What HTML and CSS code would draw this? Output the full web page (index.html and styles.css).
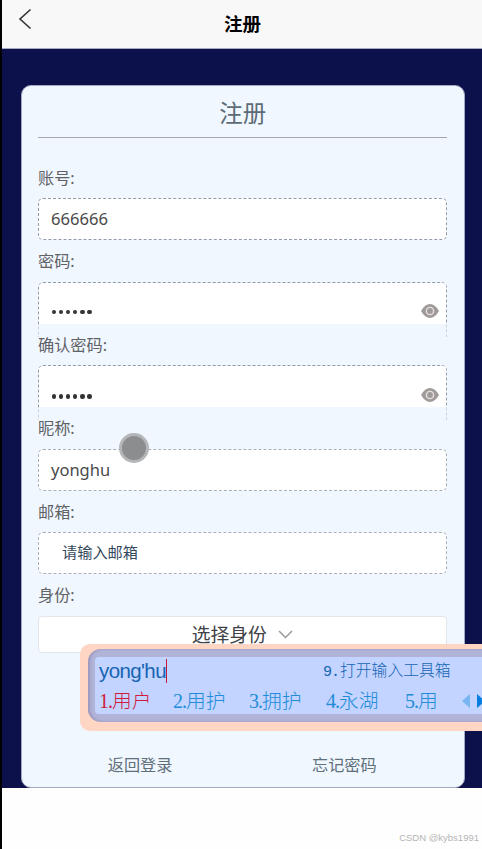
FILE: index.html
```html
<!DOCTYPE html>
<html lang="zh-CN">
<head>
<meta charset="utf-8">
<title>注册</title>
<link rel="stylesheet" href="styles.css">
</head>
<body>
<div class="phone">
  <header class="navbar">
    <svg class="back" viewBox="0 0 14 22"><path d="M12.500 1.500 2 11l10.500 9.500"/></svg>
    <h1>注册</h1>
  </header>
  <main class="page">
    <form class="card">
      <h2>注册</h2>
      <label>账号:</label>
      <div class="field">666666</div>
      <label>密码:</label>
      <div class="slot"><div class="field secret">
        <span class="dots"><i></i><i></i><i></i><i></i><i></i><i></i></span>
        <svg class="eye" viewBox="0 0 18 14"><path d="M0 7Q4 0 9 0t9 7q-4 7-9 7T0 7Z"/><circle class="ring" cx="9" cy="7" r="3.600"/></svg>
      </div></div>
      <label>确认密码:</label>
      <div class="slot"><div class="field secret second">
        <span class="dots"><i></i><i></i><i></i><i></i><i></i><i></i></span>
        <svg class="eye" viewBox="0 0 18 14"><path d="M0 7Q4 0 9 0t9 7q-4 7-9 7T0 7Z"/><circle class="ring" cx="9" cy="7" r="3.600"/></svg>
      </div></div>
      <label>昵称:</label>
      <div class="field pale nick">yonghu</div>
      <label>邮箱:</label>
      <div class="field pale placeholder">请输入邮箱</div>
      <label>身份:</label>
      <div class="select"><span>选择身份</span><svg viewBox="0 0 15 9"><path d="m1 1 6.500 6.500L14 1"/></svg></div>
      <nav class="links"><a>返回登录</a><a>忘记密码</a></nav>
    </form>
  </main>
  <footer>CSDN @kybs1991</footer>
  <div class="touch"></div>
  <div class="ime">
    <div class="ime-ring"><div class="ime-body">
      <div class="compose"><span class="pinyin">yong'hu</span><span class="tool"><b>9.</b>打开输入工具箱</span></div>
      <div class="candidates">
        <span class="active"><b>1.</b>用户</span><span><b>2.</b>用护</span><span><b>3.</b>拥护</span><span><b>4.</b>永湖</span><span><b>5.</b>用</span>
        <svg viewBox="0 0 22 14"><path class="prev" d="M8 0v14L0 7Z"/><path class="next" d="M15 0v14l8-7Z"/></svg>
      </div>
    </div></div>
  </div>
</div>
</body>
</html>
```
FILE: styles.css
```css
* { box-sizing: border-box; }
body { margin: 0; background: #fff; }
h1, h2 { margin: 0; }
.phone {
  position: relative;
  width: 482px;
  height: 849px;
  overflow: hidden;
  border-left: 2px solid #000;
  background: #fefefe;
  display: flex;
  flex-direction: column;
  font-family: "Noto Sans", "Noto Sans CJK SC", sans-serif;
}
.navbar {
  height: 49px;
  flex: none;
  display: grid;
  grid-template-columns: 40px 1fr 40px;
  background: #f8f8f8;
  border-bottom: 1px solid #a9abc4;
}
.back { width: 14px; height: 22px; margin: 8px 0 0 16px; fill: none; stroke: #333; stroke-width: 1.6; }
.navbar h1 { padding-left: 1px; text-align: center; font: bold 18.5px/46px "Noto Sans CJK SC", sans-serif; color: #000; }
.page { height: 738.5px; flex: none; padding: 36px 17.500px 0 19px; background: #0d114b; }
.card {
  height: 702.5px;
  padding: 0 17px 0 16px;
  border: 1px solid #a3a8c4;
  border-radius: 10px;
  background: #f0f7ff;
}
.card h2 {
  height: 52px;
  margin-bottom: 18.8px;
  padding-left: 1px;
  border-bottom: 1.5px solid #a5a7ae;
  text-align: center;
  font: 400 23.5px/53px "Noto Sans CJK SC", sans-serif;
  color: #5c6b76;
}
label { display: block; height: 41.7px; line-height: 42px; font-size: 16.2px; color: #606266; }
.field {
  height: 41.8px;
  border: 1.5px dashed #929baa;
  border-radius: 5px;
  background: #fff;
  padding-left: 12px;
  font-size: 16.6px;
  line-height: 39px;
  color: #4a4a4a;
}
.pale { border-color: #a8afbc; }
.nick { font-size: 16.5px; }
.placeholder { padding-left: 23px; font-size: 15.2px; color: #34495e; }
.slot { height: 41.8px; }
.secret {
  height: 55px;
  border-bottom: 0;
  border-radius: 5px 5px 0 0;
  background: linear-gradient(#fff 0 41px, #f0f7ff 41px);
  padding: 21px 7px 0 12.500px;
  display: flex;
  justify-content: space-between;
  align-items: flex-start;
  -webkit-mask-image: linear-gradient(#000 42px, rgba(0,0,0,.4) 43px);
  mask-image: linear-gradient(#000 42px, rgba(0,0,0,.4) 43px);
}
.second { padding-top: 22px; }
.dots { display: flex; gap: 2.8px; padding-top: 6px; }
.dots i { width: 4.4px; height: 4.4px; border-radius: 50%; background: #333; }
.eye { width: 18px; height: 14px; fill: #a09a99; }
.ring { stroke: #e4e2e2; stroke-width: 1.4; }
.select {
  height: 37px;
  border: 1px solid #e2e5ea;
  border-radius: 4px;
  background: #fff;
  display: flex;
  justify-content: center;
  align-items: center;
  gap: 11px;
  font-size: 18.8px;
  color: #404247;
}
.select svg { width: 15px; height: 9px; fill: none; stroke: #999; stroke-width: 1.5; }
.links { display: grid; grid-template-columns: 1fr 1fr; margin-top: 100px; text-align: center; font-size: 16.2px; line-height: 24px; color: #60707b; }
footer { padding: 42px 3px 0; text-align: right; font: 9.5px/16px "Liberation Sans", sans-serif; color: #b5b5b5; }
.touch {
  position: absolute;
  left: 117px;
  top: 433px;
  width: 30px;
  height: 30px;
  border: 3px solid #b4b6b8;
  border-radius: 50%;
  background: #8b8d8f;
}
.ime {
  position: absolute;
  left: 78px;
  top: 644px;
  width: 420px;
  height: 87px;
  padding: 5px 0 9px 8px;
  border-radius: 10px;
  background: #fed6c3;
}
.ime-ring { height: 73px; padding: 8px 0 8px 7px; border-radius: 13px; background: #b1b4d8; box-shadow: inset 2px 0 3px #9c95ba; }
.ime-body { height: 57px; padding-left: 4px; border-radius: 4px; background: #c2d4ff; }
.compose { display: flex; height: 28px; color: #1764b3; }
.pinyin { width: 68px; height: 24px; margin-top: 2px; border-right: 1.5px solid #c5163b; font: 20.5px/24px "Liberation Sans", sans-serif; letter-spacing: -.6px; white-space: nowrap; }
.tool { margin-left: 156px; font: 300 15.8px/26px "Noto Sans CJK SC", sans-serif; white-space: nowrap; }
.tool b { display: inline-block; width: 17px; font: 15px "Liberation Mono", monospace; letter-spacing: -1px; }
.candidates { display: grid; grid-template-columns: 74px 76px 77px 79px 57px 22px; height: 29px; align-items: center; color: #238cd8; font: 300 19.8px/29px "Noto Sans CJK SC", sans-serif; white-space: nowrap; }
.candidates b { font: 20px "Liberation Serif", serif; letter-spacing: -1px; }
.candidates .active { color: #d01b3b; }
.candidates svg { width: 22px; height: 14px; margin-top: 2px; overflow: visible; }
.prev { fill: #79b5f1; }
.next { fill: #087fe0; }
```
